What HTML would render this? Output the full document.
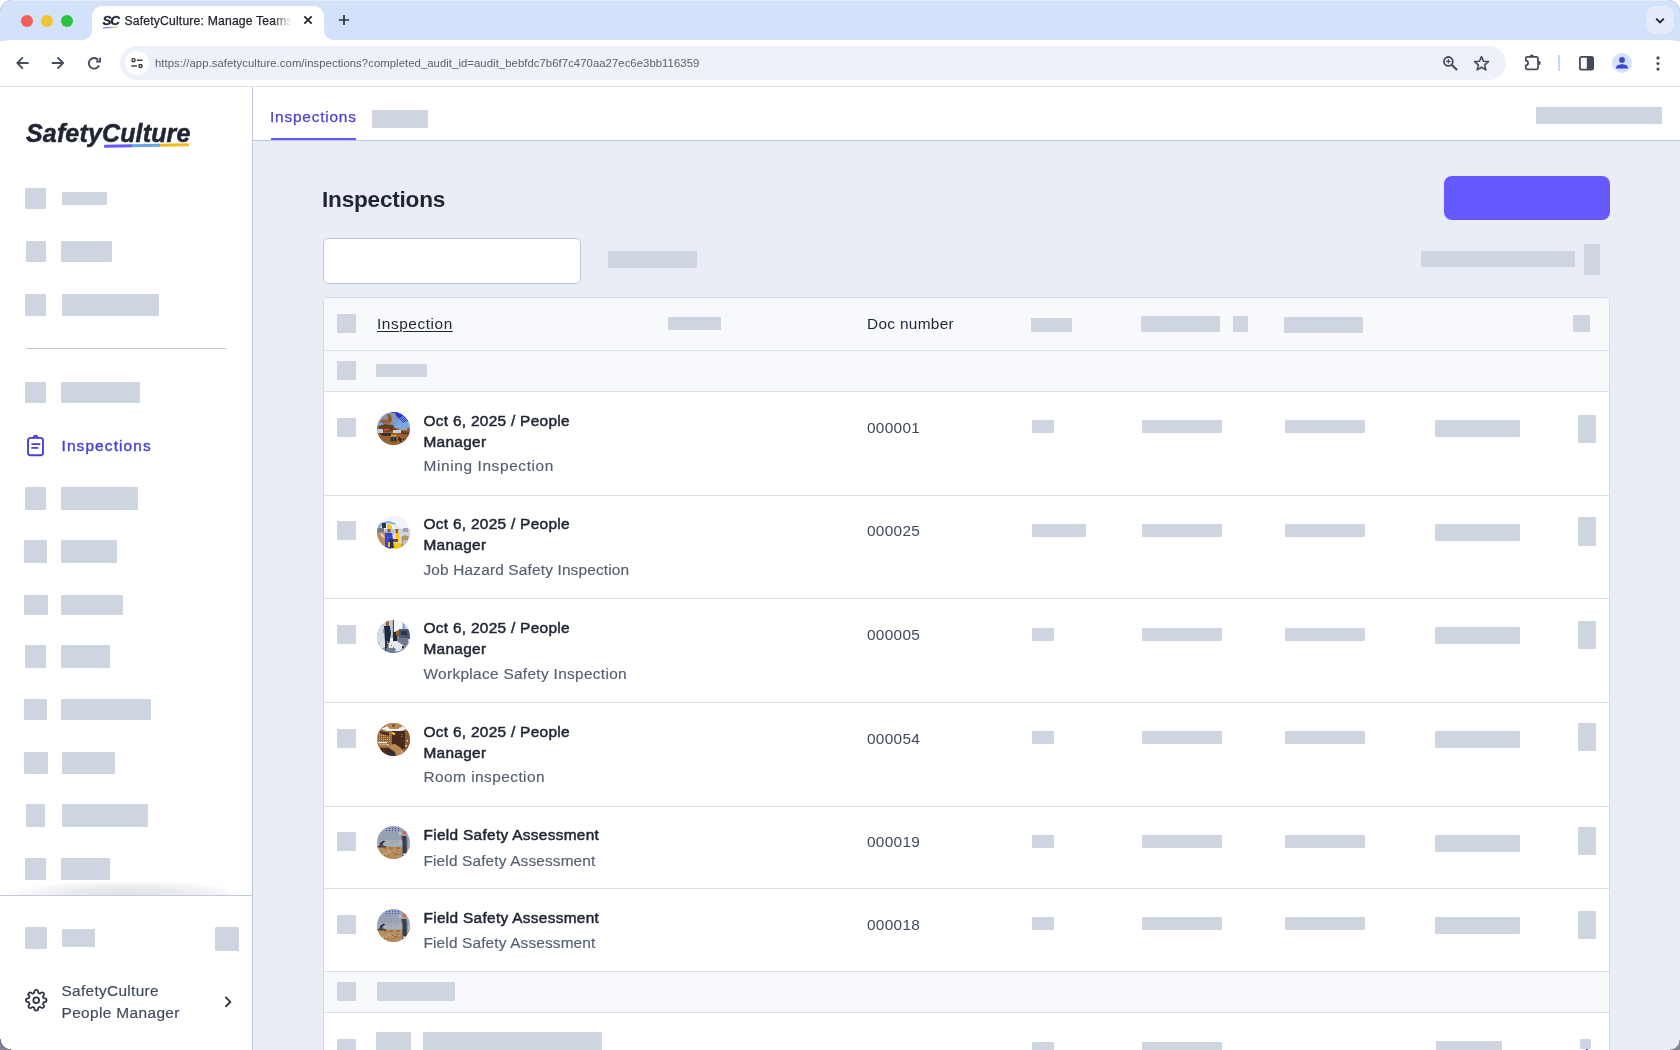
<!DOCTYPE html>
<html lang="en">
<head>
<meta charset="utf-8">
<title>SafetyCulture: Manage Teams</title>
<style>
*{box-sizing:border-box;margin:0;padding:0}
html,body{width:1680px;height:1050px;overflow:hidden;background:#fff}
body{position:relative;font-family:"Liberation Sans",sans-serif;color:#1f2533;-webkit-font-smoothing:antialiased}
.abs{position:absolute}
.ph{position:absolute;background:#ced5e0;border-radius:1px}
/* ---------- browser chrome ---------- */
#frame{position:absolute;left:0;top:0;width:1680px;height:41px;background:#d3e2fb}
#toolbar{position:absolute;left:0;top:40px;width:1680px;height:46px;background:#fff;border-radius:9px 9px 0 0}
#tbline{position:absolute;left:0;top:86px;width:1680px;height:1px;background:#dfe1e6}
#tab{position:absolute;left:92px;top:6px;width:232px;height:35px;background:#fff;border-radius:10px 10px 0 0}
#tab:before,#tab:after{content:"";position:absolute;bottom:1px;width:10px;height:10px}
#tab:before{left:-10px;background:radial-gradient(circle at 0 0,rgba(255,255,255,0) 9.5px,#fff 10.5px)}
#tab:after{right:-10px;background:radial-gradient(circle at 100% 0,rgba(255,255,255,0) 9.5px,#fff 10.5px)}
.tl{position:absolute;top:14.5px;width:12px;height:12px;border-radius:50%}
#tabtitle{position:absolute;left:124.5px;top:13px;width:168px;height:16px;font-size:12.2px;line-height:16px;color:#1f2329;white-space:nowrap;overflow:hidden;letter-spacing:.17px;-webkit-text-stroke:.25px #1f2329;-webkit-mask-image:linear-gradient(90deg,#000 148px,transparent 167px);mask-image:linear-gradient(90deg,#000 148px,transparent 167px)}
#omni{position:absolute;left:120px;top:46px;width:1386px;height:33.5px;border-radius:17px;background:#edf1fa}
#site{position:absolute;left:125px;top:51px;width:24px;height:24px;border-radius:50%;background:#fff}
#url{position:absolute;left:155px;top:55.5px;font-size:11.3px;line-height:15px;color:#5d6066;white-space:nowrap;letter-spacing:.21px}
svg{position:absolute;overflow:visible}
/* ---------- sidebar ---------- */
#side{position:absolute;left:0;top:87px;width:253px;height:963px;background:#fff;border-right:1px solid #bfc6d4}
/* ---------- main ---------- */
#main{position:absolute;left:253px;top:87px;width:1427px;height:963px;background:#e9edf6}
#hdr{position:absolute;left:253px;top:87px;width:1427px;height:54px;background:#fff;border-bottom:1px solid #bfc6d4}

.th{font-size:15.4px;line-height:22px;color:#1f2533;letter-spacing:.4px;white-space:nowrap}
.rt{font-size:15.4px;line-height:21px;color:#1f2533;-webkit-text-stroke:.5px #1f2533;letter-spacing:.5px;white-space:nowrap}
.rs{font-size:15.4px;line-height:22px;color:#545f70;-webkit-text-stroke:.15px #545f70;letter-spacing:.3px;white-space:nowrap}
.rd{font-size:15.4px;line-height:22px;color:#3f495a;letter-spacing:.0px;white-space:nowrap}

#sinsp{letter-spacing:1.13px!important}
#tabinsp{letter-spacing:.8px!important}
#h1{letter-spacing:-.22px!important}
#thinsp{letter-spacing:.56px}
#thdoc{letter-spacing:.32px}
#rt0,#rt1,#rt2,#rt3{letter-spacing:.3px}
#rt4,#rt5{letter-spacing:.31px}
#rs0{letter-spacing:.63px}
#rs1{letter-spacing:.17px}
#rs2{letter-spacing:.32px}
#rs3{letter-spacing:.46px}
#rs4,#rs5{letter-spacing:.15px}
.rd{letter-spacing:.3px!important}
#url{letter-spacing:.067px!important}
</style>
</head>
<body>
<div id="root" style="position:absolute;left:0;top:0;width:1680px;height:1050px;overflow:hidden;will-change:transform">
<!-- browser chrome -->
<div id="frame"></div>
<div class="abs" style="left:10px;top:0;width:1660px;height:1px;background:#e4ecfc"></div>
<div id="toolbar"></div>
<div id="tbline"></div>
<div id="tab"></div>
<div class="tl" style="left:21px;background:#f45e57"></div>
<div class="tl" style="left:41px;background:#f3c42f"></div>
<div class="tl" style="left:61px;background:#2dc13f"></div>
<div id="tabtitle">SafetyCulture: Manage Teams</div>
<div id="omni"></div>
<div id="site"></div>
<div id="url">https://app.safetyculture.com/inspections?completed_audit_id=audit_bebfdc7b6f7c470aa27ec6e3bb116359</div>
<!-- favicon -->
<div class="abs" style="left:102.5px;top:14px;width:18px;height:14px;font:italic bold 13.5px/14px 'Liberation Sans',sans-serif;letter-spacing:-1.3px;-webkit-text-stroke:.35px #1f2533;color:#1f2533">SC</div>
<div class="abs" style="left:103px;top:26.6px;width:14.5px;height:1.3px;background:linear-gradient(90deg,#6559ff 0 40%,#6aa6e8 40% 68%,#f5b921 68%);transform:rotate(-3deg)"></div>
<!-- tab close / new tab / tab search -->
<svg style="left:303px;top:15.25px" width="10" height="10" viewBox="0 0 10 10"><path d="M1.3 1.3l7.4 7.4M8.7 1.3L1.3 8.7" stroke="#1f2329" stroke-width="1.7" fill="none"/></svg>
<svg style="left:338px;top:14.25px" width="12" height="12" viewBox="0 0 12 12"><path d="M6 .9v10.2M.9 6h10.2" stroke="#30343a" stroke-width="1.7" fill="none"/></svg>
<div class="abs" style="left:1646px;top:6px;width:27.5px;height:28px;border-radius:9px;background:#e4ecfc"></div>
<svg style="left:1654.5px;top:16.5px" width="10" height="8" viewBox="0 0 10 8"><path d="M1.2 1.6L5 5.4l3.8-3.8" stroke="#1f2329" stroke-width="1.8" fill="none"/></svg>
<!-- nav -->
<svg style="left:0;top:.3px" width="120" height="86" viewBox="0 0 120 86"><g stroke="#454b58" stroke-width="1.8" fill="none" stroke-linecap="round" stroke-linejoin="round">
<path d="M27.900 63H17.600M22.400 57.900L17.300 63l5.100 5.100"/>
<path d="M52.500 63h10.300M58 57.900l5.100 5.100-5.100 5.100"/>
<path d="M98.16 59.89A5.3 5.3 0 1 0 99.01 65.29" stroke-linecap="butt"/>
<path d="M100.200 57.400v4.100h-4.100" stroke-linejoin="miter" stroke-linecap="butt"/>
</g></svg>
<!-- site info (tune) -->
<svg style="left:129px;top:55px" width="16" height="16" viewBox="0 0 16 16"><g stroke="#30343a" stroke-width="1.4" fill="none"><circle cx="4.500" cy="5.200" r="1.550"/><path d="M7.800 5.200h5.700"/><path d="M2.300 11h5.700"/><circle cx="11.500" cy="11" r="1.550"/></g></svg>
<!-- zoom -->
<svg style="left:1441.5px;top:55.3px" width="17" height="17" viewBox="0 0 17 17"><g stroke="#454b58" fill="none"><circle cx="6.4" cy="6.4" r="4.4" stroke-width="1.8"/><path d="M9.700 9.700l5.400 5.400" stroke-width="2.100"/><path d="M6.4 4.2v4.4M4.2 6.4h4.4" stroke-width="1.3"/></g></svg>
<!-- star -->
<svg style="left:1472.3px;top:53.8px" width="19" height="19" viewBox="0 0 19 19"><path d="M9.50 2.50 L11.44 7.23 L16.54 7.61 L12.64 10.92 L13.85 15.89 L9.50 13.20 L5.15 15.89 L6.36 10.92 L2.46 7.61 L7.56 7.23z" stroke="#454b58" stroke-width="1.6" fill="none" stroke-linejoin="round"/></svg>
<!-- extensions -->
<svg style="left:1523px;top:52px" width="20" height="20" viewBox="0 0 20 20"><path d="M4.300 4.900H13.500a1.500 1.500 0 0 1 1.500 1.500V15.900a1.500 1.500 0 0 1-1.500 1.500H4.300a1.500 1.500 0 0 1-1.500-1.500V13.300a2.300 2.300 0 0 0 0-4.600V6.400a1.500 1.500 0 0 1 1.500-1.500z" stroke="#454b58" stroke-width="1.700" fill="none" stroke-linejoin="round"/><path d="M6.700 4.500a2.100 2.100 0 0 1 4.200 0z" fill="#454b58"/><path d="M15.400 8.700a2.300 2.300 0 0 1 0 4.600z" fill="#454b58"/></svg>
<div class="abs" style="left:1558px;top:55px;width:1.5px;height:16px;background:#c9d8f6"></div>
<!-- side panel -->
<svg style="left:1578.5px;top:56px" width="15" height="14.5" viewBox="0 0 15 14.5"><rect x=".9" y=".9" width="13.2" height="12.7" rx="1.6" stroke="#454b58" stroke-width="1.8" fill="none"/><rect x="7.8" y=".9" width="6.3" height="12.7" fill="#454b58"/></svg>
<!-- profile -->
<div class="abs" style="left:1611.7px;top:53px;width:20px;height:20px;border-radius:50%;background:#d3e3fd"></div>
<svg style="left:1611.7px;top:53px" width="20" height="20" viewBox="0 0 20 20"><circle cx="10" cy="6.9" r="2.9" fill="#3c46d2"/><path d="M4 14.700c0-2.500 3.800-3.500 6-3.500s6 1 6 3.500v.8H4z" fill="#3c46d2"/></svg>
<!-- menu -->
<svg style="left:1655.7px;top:55.500px" width="4" height="15" viewBox="0 0 4 15"><g fill="#454b58"><circle cx="2" cy="1.900" r="1.600"/><circle cx="2" cy="7.500" r="1.600"/><circle cx="2" cy="13.100" r="1.600"/></g></svg>
<!-- window corners -->
<div class="abs" style="left:0;top:0;width:11px;height:11px;background:radial-gradient(circle at 100% 100%,rgba(255,255,255,0) 10px,#c2c5cc 10.500px,#fff 11.300px)"></div>
<div class="abs" style="left:1669px;top:0;width:11px;height:11px;background:radial-gradient(circle at 0 100%,rgba(255,255,255,0) 10px,#c2c5cc 10.500px,#fff 11.300px)"></div>
<div class="abs" style="left:0;top:1039px;width:11px;height:11px;z-index:50;background:radial-gradient(circle at 100% 0,rgba(106,112,128,0) 9.800px,#6a7080 10.600px,#7d8494 11.500px)"></div>
<div class="abs" style="left:1670px;top:1040px;width:10px;height:10px;z-index:50;background:radial-gradient(circle at 0 0,rgba(125,132,148,0) 9px,#858b9a 9.800px,#7d8494 11px)"></div>
<!-- CHROME-ICONS-END -->

<svg width="0" height="0" style="position:absolute;left:0;top:0">
<defs>
<clipPath id="cc"><circle cx="16.5" cy="16.5" r="16.5"/></clipPath>
<pattern id="dz1" width="2" height="2" patternUnits="userSpaceOnUse"><rect width="1" height="1" fill="#2f33d6"/><rect x="1" y="1" width="1" height="1" fill="#2f33d6"/></pattern>
<pattern id="dz5" width="4" height="3" patternUnits="userSpaceOnUse"><rect width="1" height="1" fill="#6a9eea"/><rect x="2" y="1.500" width="1" height="1" fill="#6a9eea"/></pattern>
<pattern id="dz5b" width="3" height="2" patternUnits="userSpaceOnUse"><rect width="1" height="1" fill="#3a44d2"/></pattern>
<pattern id="dz4" width="2" height="2" patternUnits="userSpaceOnUse"><rect width="1" height="1" fill="#c9a06a"/><rect x="1" y="1" width="1" height="1" fill="#8a5a30"/></pattern>
<g id="a1" clip-path="url(#cc)">
<rect width="33" height="33" fill="#79a8e2"/>
<path d="M14 0h14l4 9-6 2-5-4-4-3z" fill="url(#dz1)"/>
<path d="M15 0h6l5 4-4 2-6-3z" fill="#2f33d6"/>
<path d="M4 6l6-5h8l3 6-1 6-4 2-3-3-4 1-4-3z" fill="#8b97a9"/>
<path d="M10 2l4 1 1 5-2 4-3-2 1-4z" fill="#8a5a30"/>
<path d="M16 8l3-1 1 6-3 2z" fill="#6f9fdd"/>
<path d="M0 14l5-1 8 1 5 2 5 .5 10-.5v17H0z" fill="#9a6232"/><path d="M2 10l4-3 6 1 1 3-5 1z" fill="#9a6232"/>
<path d="M2 14l6-2 8 1 2 4 6 2 8 1v3l-9-1-7-3-6 1-8-1z" fill="#6a3f1f"/>
<rect x="0" y="17" width="6" height="4" fill="#c4cddb"/>
<rect x="16" y="18" width="8" height="3" fill="#c9d1de"/>
<rect x="22" y="16" width="8" height="2" fill="#9aa5b6"/>
<rect x="7" y="17" width="5" height="1.300" fill="#f0584a"/>
<path d="M2 21h11l2 3H6z" fill="#4a2c18"/>
<rect x="9" y="21" width="5" height="2" fill="#24324a"/>
<rect x="14" y="23" width="2.200" height="1.400" fill="#f5c518"/><rect x="17" y="23" width="2.200" height="1.400" fill="#f5c518"/>
<rect x="14" y="25" width="2" height="4.500" fill="#1f2a3c"/><rect x="17" y="25" width="2" height="4.500" fill="#1f2a3c"/>
<rect x="13" y="27" width="7" height="2" fill="#4a2c18" opacity=".7"/>
<rect x="22.500" y="21.500" width="1.400" height="1.400" fill="#f0584a"/>
<path d="M21 25h2v1h1v1h1v1h-1v1h1v1h-2v-1h-1v-1h-1v-1h1v-1h-1z" fill="#3a2414"/><rect x="26" y="26" width="1" height="2" fill="#3a2414"/>
</g>
<g id="a2" clip-path="url(#cc)">
<rect width="33" height="33" fill="#f1f3f8"/>
<path d="M0 13h33v6H0z" fill="#bcc5d2"/><path d="M0 19h33v14H0z" fill="#e6e9f0"/>
<path d="M17 14h16v8H17z" fill="#cfd5e0"/>
<path d="M26 12h5v4h-5z" fill="#9aa5b6"/>
<path d="M0 10l4-3 7-2 7 2 1 2-8-2-6 2-3 4-2 1z" fill="#79a8e2"/>
<path d="M5 7h4v5H5z" fill="#2a3446"/>
<path d="M0 12h7v4H0z" fill="#6e7c91"/>
<path d="M0 16h9l2 15H4L0 24z" fill="#b8905f"/>
<path d="M3 17l3 1 2 4-3-1z" fill="#d9dee8"/>
<path d="M24 21l4-2 4 2-2 6-4 4-3 0z" fill="#b8905f"/>
<path d="M26 24h4v5h-4z" fill="#b9c2d0"/>
<path d="M10 8h3l2 2v3h-5z" fill="#f5c518"/>
<rect x="10.500" y="13" width="3" height="3.500" fill="#8a5a33"/>
<path d="M8 17h7l1 6-1 8H8z" fill="#3a40da"/>
<path d="M8 30h6v3H8z" fill="#3a40da"/>
<rect x="10" y="21" width="1.300" height="1.300" fill="#2fc14a"/>
<path d="M12 23h4l1 9h-4z" fill="#2a3446"/>
<rect x="11" y="26" width="2" height="5" fill="#e8b820"/>
<path d="M18 10h4v3h-4z" fill="#e3e8f0"/>
<rect x="18.500" y="13" width="2.600" height="4.500" fill="#8a5a33"/>
<path d="M17 17h7l1 11h-8z" fill="#d4dae5"/>
<path d="M19 17h3v8h-3z" fill="#f5c518"/>
<path d="M16 23h5v3h-5z" fill="#7a4a2a"/>
<path d="M17 27h7v6h-7z" fill="#f5c518"/>
</g>
<g id="a3" clip-path="url(#cc)">
<rect width="33" height="33" fill="#c3cadb"/>
<path d="M0 6h7v18H0z" fill="#d5dbe8"/>
<path d="M17 0h8v11h-8z" fill="#f3f5f9"/>
<path d="M25 0h8v10h-8z" fill="#c9d4ea"/>
<rect x="15.800" y="0" width="1.200" height="19" fill="#4a5468"/>
<rect x="26" y="3.500" width="1.600" height="6.500" fill="#6a9ee8"/>
<path d="M0 22h33v11H0z" fill="#8d98ab"/>
<path d="M2 22l6-1v6l-4 2z" fill="#dfe3ed"/>
<rect x="9" y="1" width="3" height="5" fill="#9a6232"/>
<path d="M7 6h6l1 7-1 8H8z" fill="#1f2a3c"/>
<path d="M8 20h2.500v11H8z" fill="#2a3446"/>
<rect x="10.500" y="21" width="2" height="4" fill="#1f2a3c"/>
<rect x="6" y="9" width="1.200" height="4" fill="#6a9ee8"/><rect x="13" y="8" width="1" height="2" fill="#6a9ee8"/>
<path d="M16 12h4l1 9h-5z" fill="#1f2a3c"/>
<path d="M19 11l3-1 2 2v4l-3 1-2-2z" fill="#9a6232"/>
<path d="M22 9h11v10H22z" fill="#4f5a6e"/>
<path d="M24 11h6v4h-6z" fill="#2a3446"/>
<rect x="28" y="15.500" width="2" height="1.500" fill="#2f33d6"/>
<path d="M20 18h11v6H20z" fill="#6f7a8e"/>
<path d="M13 18h3v5h-3z" fill="#eef0f5"/>
<path d="M11 23l9-2 7 5-4 5H13z" fill="#e2e6ee"/>
<path d="M9 28h9v5H9z" fill="#6f7a8e"/>
<rect x="26" y="24" width="3" height="1.200" fill="#9a6232"/>
<rect x="25" y="26" width="2" height="2" fill="#2a3446"/>
<g fill="#b87a3f"><rect x="11" y="24" width="1" height="2"/><rect x="14" y="25" width="1" height="1"/><rect x="16" y="27" width="1" height="1"/><rect x="12" y="29" width="1" height="1.500"/><rect x="14" y="29" width="1" height="2"/><rect x="16" y="30" width="1" height="1.500"/><rect x="18" y="29" width="1" height="1"/><rect x="10" y="21" width="1" height="3"/></g>
</g>
<g id="a4" clip-path="url(#cc)">
<rect width="33" height="33" fill="#9a6a3c"/>
<path d="M0 9h13v10H0z" fill="url(#dz4)"/>
<path d="M8 0h18l2 5-8 2-10-1z" fill="#b98a55"/>
<path d="M4 6l6-3 3 3 8 0 5-3 4 3-6 2H10z" fill="#eef0f3"/>
<rect x="15.500" y="1.600" width="2" height="2" fill="#4a2a1a"/>
<path d="M15 8h14v18H15z" fill="#4a2a1a"/>
<path d="M3 8l9 2v3l-9-3z" fill="#4a2a1a"/>
<rect x="14.500" y="9" width="1.400" height="2.400" fill="#f5c518"/><rect x="16" y="9.500" width="1.300" height="2.200" fill="#f3f3f3"/><rect x="17.300" y="10" width="1" height="2" fill="#f5c518"/>
<rect x="24" y="11" width="1.300" height="1" fill="#a4713f"/><rect x="24" y="13" width="1.300" height="1" fill="#a4713f"/>
<rect x="1" y="19" width="9" height="1.200" fill="#f1f1f1"/>
<rect x="2" y="21" width="8" height="1.500" fill="#c9a06a"/>
<rect x="10" y="21" width="2" height="2" fill="#c4cddb"/>
<path d="M10 22l8-1 6 4 2 6-8 2-4-6z" fill="#b98a55"/>
<path d="M3 25l9 0 6 4 1 4H7z" fill="#4a2a1a"/>
<path d="M10 27l5 0 1 4-4 1z" fill="#26304a"/>
<path d="M28 8h5v18h-5z" fill="#8a5a30"/>
<rect x="29.500" y="17" width="1.500" height="1.500" fill="#c4cddb"/><rect x="28" y="22" width="2" height="1.500" fill="#c4cddb"/><rect x="24" y="28" width="1.500" height="1.500" fill="#c4cddb"/>
</g>
<g id="a5" clip-path="url(#cc)">
<rect width="33" height="33" fill="#9aa3b3"/>
<path d="M0 14h33v7H0z" fill="#a6aebc"/>
<path d="M2 5h20v12H2z" fill="url(#dz5)"/>
<path d="M9 1h13v4H9z" fill="url(#dz5b)"/>
<path d="M0 20.500h33v13H0z" fill="#b8905f"/>
<path d="M0 20h9v1.500H0z" fill="#5a3a22"/>
<path d="M3 17l4-2.500 1 1-3 2.500v3H3z" fill="#1f2a3c"/>
<rect x="2" y="18.500" width="4.500" height="2" fill="#4a5468"/>
<rect x="21.500" y="6" width="3" height="3" fill="#b5bcc8"/>
<path d="M26 5h2.500l1 3h-4z" fill="#f0564a"/>
<rect x="26.500" y="8" width="2" height="2" fill="#b8905f"/>
<path d="M24 10l2 0 1 4-2 1z" fill="#8a5a33"/>
<path d="M25.500 10h4l.5 9-.5 11h-4z" fill="#343e52"/>
<path d="M29 11l1.500 3v6H29z" fill="#5a6478"/>
<rect x="26" y="27.500" width="3" height="1.500" fill="#eef0f5"/>
<g fill="#8a5a33"><rect x="12" y="21.500" width="4" height="1"/><rect x="19" y="21.500" width="4" height="1"/><rect x="7" y="21.500" width="3" height="1"/><rect x="20" y="24.500" width="1.500" height="1"/><rect x="15" y="26" width="1" height="1"/><rect x="17" y="27.500" width="4" height="1"/><rect x="22.500" y="27.500" width="1" height="1"/><rect x="10" y="29.500" width="2" height="1"/><rect x="13" y="29.500" width="1" height="1"/><rect x="16" y="29.500" width="1" height="1"/><rect x="7" y="29" width="1" height="1"/></g>
<g fill="#c4cddb"><rect x="10.500" y="25.500" width="1" height="1"/><rect x="12.500" y="25.500" width="1" height="1"/><rect x="6" y="27.500" width="1" height="1"/><rect x="8.500" y="27.500" width="1" height="1"/></g>
</g>
</defs>
</svg>
<!-- page -->
<div id="side"></div>
<div id="main"></div>
<div id="hdr"></div>
<!-- logo -->
<div id="logo" class="abs" style="left:26px;top:118.300px;height:30px;font:italic bold 25px/30px 'Liberation Sans',sans-serif;letter-spacing:.15px;-webkit-text-stroke:.5px #1f2533;color:#1f2533;white-space:nowrap">SafetyCulture</div>
<div class="abs" style="left:103.5px;top:144.3px;width:85px;height:2.6px;border-radius:1px;background:linear-gradient(90deg,#6559ff 0 33%,#6aa5e8 33% 66%,#f5b921 66%);transform:rotate(-.9deg)"></div>
<div class="ph" style="left:25px;top:188px;width:21px;height:21px"></div>
<div class="ph" style="left:62px;top:192px;width:45px;height:13px"></div>
<div class="ph" style="left:26px;top:241px;width:20px;height:21px"></div>
<div class="ph" style="left:61px;top:241px;width:51px;height:21px"></div>
<div class="ph" style="left:25px;top:294px;width:21px;height:22px"></div>
<div class="ph" style="left:62px;top:294px;width:97px;height:22px"></div>
<div class="ph" style="left:25px;top:382px;width:21px;height:21px"></div>
<div class="ph" style="left:61px;top:382px;width:79px;height:21px"></div>
<div class="ph" style="left:25px;top:487px;width:21px;height:23px"></div>
<div class="ph" style="left:61px;top:487px;width:77px;height:23px"></div>
<div class="ph" style="left:24px;top:540px;width:23px;height:22.5px"></div>
<div class="ph" style="left:61px;top:540px;width:56px;height:22.5px"></div>
<div class="ph" style="left:24px;top:595px;width:24px;height:20px"></div>
<div class="ph" style="left:61px;top:595px;width:62px;height:20px"></div>
<div class="ph" style="left:25px;top:645px;width:21px;height:23px"></div>
<div class="ph" style="left:61px;top:645px;width:49px;height:23px"></div>
<div class="ph" style="left:24px;top:699px;width:23px;height:21px"></div>
<div class="ph" style="left:61px;top:699px;width:90px;height:21px"></div>
<div class="ph" style="left:24px;top:752px;width:24px;height:22px"></div>
<div class="ph" style="left:62px;top:752px;width:53px;height:22px"></div>
<div class="ph" style="left:26px;top:804px;width:19px;height:23px"></div>
<div class="ph" style="left:62px;top:804px;width:86px;height:23px"></div>
<div class="ph" style="left:25px;top:858px;width:21px;height:22px"></div>
<div class="ph" style="left:61px;top:858px;width:49px;height:22px"></div>
<div class="abs" style="left:26px;top:348px;width:200px;height:1px;background:#c3c9d8"></div>
<svg style="left:25px;top:433px" width="22" height="25" viewBox="0 0 22 25"><g stroke="#4740d4" stroke-width="1.9" fill="none" stroke-linecap="round" stroke-linejoin="round"><path d="M8.300 4.900H5.500a2.500 2.500 0 0 0-2.500 2.500v12.300a2.500 2.500 0 0 0 2.500 2.500h10a2.500 2.500 0 0 0 2.500-2.500V7.400a2.500 2.500 0 0 0-2.500-2.500h-2.800"/><path d="M8.600 4.900c.2-1.500.9-2.200 1.900-2.200s1.700.7 1.900 2.200z"/><path d="M7.100 11.100h7.500M7.100 14.900h5.400"/></g></svg>
<div id="sinsp" class="abs" style="left:61.500px;top:434.7px;height:22px;font-size:15.400px;line-height:22px;color:#4740d4;letter-spacing:.55px;-webkit-text-stroke:.4px #4740d4;white-space:nowrap">Inspections</div>
<div class="abs" style="left:6px;top:880px;width:240px;height:15px;background:radial-gradient(ellipse 50% 100% at 50% 100%,rgba(70,76,92,.16) 0%,rgba(70,76,92,.12) 45%,rgba(70,76,92,.05) 80%,rgba(70,76,92,0) 100%)"></div>
<div class="abs" style="left:0;top:895px;width:252px;height:1px;background:#c3c9d8"></div>
<div class="ph" style="left:25px;top:927px;width:22px;height:22px"></div>
<div class="ph" style="left:62px;top:929px;width:33px;height:18px"></div>
<div class="ph" style="left:215px;top:927px;width:24px;height:24px"></div>
<svg style="left:24.800px;top:988.700px" width="22.500" height="22.500" viewBox="0 0 24 24"><g stroke="#2c3444" stroke-width="1.9" fill="none" stroke-linejoin="round"><circle cx="12" cy="12" r="3.100"/><path d="M19.400 15a1.650 1.650 0 0 0 .33 1.820l.06.06a2 2 0 1 1-2.830 2.830l-.06-.06a1.650 1.650 0 0 0-1.820-.33 1.650 1.650 0 0 0-1 1.510V21a2 2 0 0 1-4 0v-.09A1.650 1.650 0 0 0 9 19.400a1.650 1.650 0 0 0-1.820.33l-.06.06a2 2 0 1 1-2.830-2.830l.06-.06a1.650 1.650 0 0 0 .33-1.820 1.650 1.650 0 0 0-1.510-1H3a2 2 0 0 1 0-4h.09A1.650 1.650 0 0 0 4.600 9a1.650 1.650 0 0 0-.33-1.820l-.06-.06a2 2 0 1 1 2.830-2.830l.06.06a1.650 1.650 0 0 0 1.820.33H9a1.650 1.650 0 0 0 1-1.510V3a2 2 0 0 1 4 0v.09a1.650 1.650 0 0 0 1 1.510 1.650 1.650 0 0 0 1.820-.33l.06-.06a2 2 0 1 1 2.830 2.830l-.06.06a1.650 1.650 0 0 0-.33 1.820V9a1.650 1.650 0 0 0 1.510 1H21a2 2 0 0 1 0 4h-.09a1.650 1.650 0 0 0-1.510 1z"/></g></svg>
<div id="org" class="abs" style="left:61.500px;top:979.500px;font-size:15.400px;line-height:22px;color:#3f495a;letter-spacing:.3px;-webkit-text-stroke:.15px #3f495a;white-space:nowrap"><span style="display:block;letter-spacing:.32px">SafetyCulture</span><span style="display:block;letter-spacing:.38px">People Manager</span></div>
<svg style="left:222px;top:994px" width="12" height="16" viewBox="0 0 12 16"><path d="M3.400 2.900L8.300 7.900l-4.900 5" stroke="#2c3444" stroke-width="1.900" fill="none"/></svg>
<!-- SIDEBAR-END -->
<div id="tabinsp" class="abs" style="left:270px;top:106.100px;height:22px;font-size:15.4px;line-height:22px;color:#4740d4;letter-spacing:.45px;-webkit-text-stroke:.25px #4740d4;white-space:nowrap">Inspections</div>
<div class="abs" style="left:271px;top:137.800px;width:85px;height:2.200px;background:#6559ff"></div>
<div class="ph" style="left:372px;top:110px;width:56px;height:17.5px"></div>
<div class="ph" style="left:1536px;top:107px;width:126px;height:17px"></div>
<!-- HEADER-END -->
<div id="h1" class="abs" style="left:322px;top:185.200px;height:30px;font-size:22.6px;font-weight:bold;line-height:30px;color:#1f2533;letter-spacing:.2px;white-space:nowrap">Inspections</div>
<div class="abs" style="left:1444px;top:176px;width:166px;height:44px;border-radius:8px;background:#6559ff"></div>
<div class="abs" style="left:323px;top:238px;width:258px;height:45.5px;border-radius:5px;background:#fff;border:1px solid #bfc6d4"></div>
<div class="ph" style="left:608px;top:251px;width:89px;height:16.5px"></div>
<div class="ph" style="left:1421px;top:251px;width:154px;height:16px"></div>
<div class="ph" style="left:1584px;top:244px;width:16px;height:30.5px"></div>
<div id="tbl" class="abs" style="left:323px;top:297px;width:1287px;height:760px;border:1px solid #d5dae6;border-radius:5px 5px 0 0;background:#fff;overflow:hidden"></div>
<div class="abs" style="left:324px;top:298px;width:1285px;height:52px;background:#f8f9fc;border-radius:4px 4px 0 0"></div>
<div class="abs" style="left:324px;top:350px;width:1285px;height:1px;background:#dbdfea"></div>
<div class="abs" style="left:324px;top:351px;width:1285px;height:40px;background:#f8f9fc"></div>
<div class="abs" style="left:324px;top:391px;width:1285px;height:1px;background:#dbdfea"></div>
<div class="abs" style="left:324px;top:495px;width:1285px;height:1px;background:#dbdfea"></div>
<div class="abs" style="left:324px;top:598px;width:1285px;height:1px;background:#dbdfea"></div>
<div class="abs" style="left:324px;top:702px;width:1285px;height:1px;background:#dbdfea"></div>
<div class="abs" style="left:324px;top:806px;width:1285px;height:1px;background:#dbdfea"></div>
<div class="abs" style="left:324px;top:888px;width:1285px;height:1px;background:#dbdfea"></div>
<div class="abs" style="left:324px;top:971px;width:1285px;height:1px;background:#dbdfea"></div>
<div class="abs" style="left:324px;top:972px;width:1285px;height:40px;background:#f8f9fc"></div>
<div class="abs" style="left:324px;top:1012px;width:1285px;height:1px;background:#dbdfea"></div>
<div class="ph" style="left:337px;top:314px;width:19px;height:19px"></div>
<div id="thinsp" class="abs th" style="left:377px;top:312.8px;text-decoration:underline;text-underline-offset:1.5px;text-decoration-thickness:.8px">Inspection</div>
<div class="ph" style="left:668px;top:317px;width:53px;height:13px"></div>
<div id="thdoc" class="abs th" style="left:867px;top:312.8px">Doc number</div>
<div class="ph" style="left:1031px;top:318px;width:41px;height:14px"></div>
<div class="ph" style="left:1141px;top:316px;width:79px;height:16px"></div>
<div class="ph" style="left:1233px;top:316px;width:15px;height:16px"></div>
<div class="ph" style="left:1284px;top:317px;width:79px;height:15.5px"></div>
<div class="ph" style="left:1573px;top:315px;width:17px;height:17px"></div>
<div class="ph" style="left:337px;top:361px;width:19px;height:19px"></div>
<div class="ph" style="left:376px;top:364px;width:51px;height:13px"></div>
<div class="ph" style="left:337px;top:418px;width:19px;height:19px"></div>
<svg class="av" style="left:377px;top:412px" width="33" height="33" viewBox="0 0 33 33"><use href="#a1"/></svg>
<div class="abs rt" id="rt0" style="left:423.5px;top:409.8px">Oct 6, 2025 / People<br>Manager</div>
<div class="abs rs" id="rs0" style="left:423.5px;top:455.4px">Mining Inspection</div>
<div class="abs rd" id="rd0" style="left:867px;top:416.7px">000001</div>
<div class="ph" style="left:1032px;top:420px;width:22px;height:13px"></div>
<div class="ph" style="left:1142px;top:420px;width:80px;height:13px"></div>
<div class="ph" style="left:1285px;top:420px;width:80px;height:13px"></div>
<div class="ph" style="left:1435px;top:420px;width:85px;height:17px"></div>
<div class="ph" style="left:1578px;top:415px;width:18px;height:28px"></div>
<div class="ph" style="left:337px;top:521px;width:19px;height:19px"></div>
<svg class="av" style="left:377px;top:516px" width="33" height="33" viewBox="0 0 33 33"><use href="#a2"/></svg>
<div class="abs rt" id="rt1" style="left:423.5px;top:512.9px">Oct 6, 2025 / People<br>Manager</div>
<div class="abs rs" id="rs1" style="left:423.5px;top:559.1px">Job Hazard Safety Inspection</div>
<div class="abs rd" id="rd1" style="left:867px;top:520.4px">000025</div>
<div class="ph" style="left:1032px;top:524px;width:54px;height:13px"></div>
<div class="ph" style="left:1142px;top:524px;width:80px;height:13px"></div>
<div class="ph" style="left:1285px;top:524px;width:80px;height:13px"></div>
<div class="ph" style="left:1435px;top:524px;width:85px;height:17px"></div>
<div class="ph" style="left:1578px;top:517px;width:18px;height:28.5px"></div>
<div class="ph" style="left:337px;top:625px;width:19px;height:19px"></div>
<svg class="av" style="left:377px;top:619.5px" width="33" height="33" viewBox="0 0 33 33"><use href="#a3"/></svg>
<div class="abs rt" id="rt2" style="left:423.5px;top:617.1px">Oct 6, 2025 / People<br>Manager</div>
<div class="abs rs" id="rs2" style="left:423.5px;top:662.7px">Workplace Safety Inspection</div>
<div class="abs rd" id="rd2" style="left:867px;top:624.0px">000005</div>
<div class="ph" style="left:1032px;top:628px;width:22px;height:13px"></div>
<div class="ph" style="left:1142px;top:628px;width:80px;height:13px"></div>
<div class="ph" style="left:1285px;top:628px;width:80px;height:13px"></div>
<div class="ph" style="left:1435px;top:627px;width:85px;height:17px"></div>
<div class="ph" style="left:1578px;top:621px;width:18px;height:28px"></div>
<div class="ph" style="left:337px;top:729px;width:19px;height:19px"></div>
<svg class="av" style="left:377px;top:723px" width="33" height="33" viewBox="0 0 33 33"><use href="#a4"/></svg>
<div class="abs rt" id="rt3" style="left:423.5px;top:720.8px">Oct 6, 2025 / People<br>Manager</div>
<div class="abs rs" id="rs3" style="left:423.5px;top:766.4px">Room inspection</div>
<div class="abs rd" id="rd3" style="left:867px;top:727.7px">000054</div>
<div class="ph" style="left:1032px;top:731px;width:22px;height:13px"></div>
<div class="ph" style="left:1142px;top:731px;width:80px;height:13px"></div>
<div class="ph" style="left:1285px;top:731px;width:80px;height:13px"></div>
<div class="ph" style="left:1435px;top:731px;width:85px;height:17px"></div>
<div class="ph" style="left:1578px;top:723px;width:18px;height:28px"></div>
<div class="ph" style="left:337px;top:832px;width:19px;height:19px"></div>
<svg class="av" style="left:377px;top:826px" width="33" height="33" viewBox="0 0 33 33"><use href="#a5"/></svg>
<div class="abs rt" id="rt4" style="left:423.5px;top:824.2px">Field Safety Assessment</div>
<div class="abs rs" id="rs4" style="left:423.5px;top:849.6px">Field Safety Assessment</div>
<div class="abs rd" id="rd4" style="left:867px;top:830.8px">000019</div>
<div class="ph" style="left:1032px;top:835px;width:22px;height:13px"></div>
<div class="ph" style="left:1142px;top:835px;width:80px;height:13px"></div>
<div class="ph" style="left:1285px;top:835px;width:80px;height:13px"></div>
<div class="ph" style="left:1435px;top:835px;width:85px;height:17px"></div>
<div class="ph" style="left:1578px;top:827px;width:18px;height:28px"></div>
<div class="ph" style="left:337px;top:915px;width:19px;height:19px"></div>
<svg class="av" style="left:377px;top:909px" width="33" height="33" viewBox="0 0 33 33"><use href="#a5"/></svg>
<div class="abs rt" id="rt5" style="left:423.5px;top:906.9px">Field Safety Assessment</div>
<div class="abs rs" id="rs5" style="left:423.5px;top:932.3px">Field Safety Assessment</div>
<div class="abs rd" id="rd5" style="left:867px;top:913.9px">000018</div>
<div class="ph" style="left:1032px;top:917px;width:22px;height:13px"></div>
<div class="ph" style="left:1142px;top:917px;width:80px;height:13px"></div>
<div class="ph" style="left:1285px;top:917px;width:80px;height:13px"></div>
<div class="ph" style="left:1435px;top:917px;width:85px;height:17px"></div>
<div class="ph" style="left:1578px;top:911px;width:18px;height:28px"></div>
<div class="ph" style="left:337px;top:982px;width:19px;height:18.5px"></div>
<div class="ph" style="left:377px;top:982px;width:78px;height:18.5px"></div>
<div class="ph" style="left:337px;top:1039px;width:19px;height:19px"></div>
<div class="ph" style="left:376px;top:1032px;width:35px;height:28px"></div>
<div class="ph" style="left:423px;top:1032px;width:179px;height:28px"></div>
<div class="ph" style="left:1032px;top:1041.5px;width:22px;height:13.5px"></div>
<div class="ph" style="left:1142px;top:1041.5px;width:80px;height:13.5px"></div>
<div class="ph" style="left:1436px;top:1040.5px;width:66px;height:17.5px"></div>
<div class="ph" style="left:1580px;top:1039px;width:11px;height:9.8px"></div>
<div class="abs" style="left:1585.5px;top:1048.8px;width:2.5px;height:2px;background:#4740d4"></div>
<!-- TABLE-END -->
<!-- CONTENT-END -->
</div>
</body>
</html>
